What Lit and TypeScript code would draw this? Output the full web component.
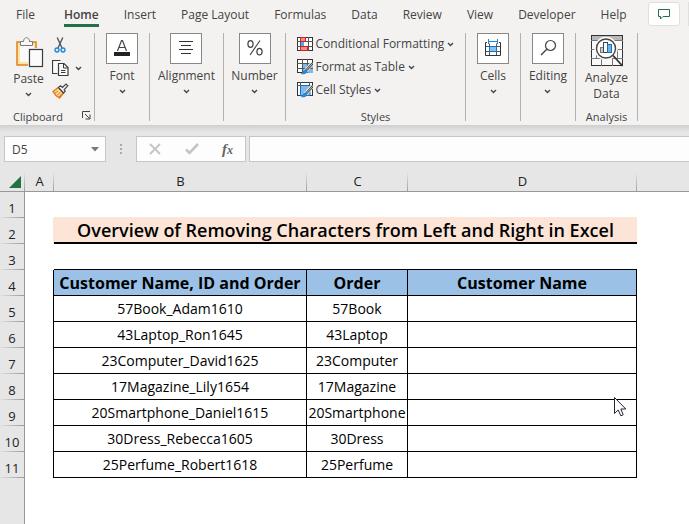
import { LitElement, html, css } from "lit";
import { customElement } from "lit/decorators.js";

const chevron = html`<svg class="chev" width="7" height="5" viewBox="0 0 7 5" aria-hidden="true">
  <path d="M1 1 L3.5 3.5 L6 1" fill="none" stroke="#444" stroke-width="1.4" />
</svg>`;

const icons = {
  paste: html`<svg width="28" height="31" viewBox="0 0 28 31" aria-hidden="true">
    <rect x="1" y="5" width="19" height="23" fill="#fbe3a6" stroke="#e07a10" stroke-width="1.4" />
    <rect x="4" y="8" width="14" height="17" fill="#fafafa" />
    <path d="M4.5 8.5 V4.5 H7.5 C7.5 -0.5 13.5 -0.5 13.5 4.5 H16.5 V8.5 Z" fill="#f8f8f8" stroke="#7a7a7a" />
    <rect x="12" y="11" width="16" height="20" fill="#f3f2f1" />
    <rect x="13.5" y="12.5" width="13" height="17" fill="#fbfbfb" stroke="#3b3b3b" stroke-width="1.2" />
  </svg>`,
  cut: html`<svg width="16" height="16" viewBox="0 0 16 16" aria-hidden="true">
    <path d="M5.2 0.5 L10 11 M10.8 0.5 L6 11" fill="none" stroke="#555" stroke-width="1.4" />
    <circle cx="5" cy="13" r="2" fill="#d8ecfa" stroke="#1e86d2" stroke-width="1.3" />
    <circle cx="11" cy="13" r="2" fill="#d8ecfa" stroke="#1e86d2" stroke-width="1.3" />
  </svg>`,
  copy: html`<svg width="17" height="17" viewBox="0 0 17 17" aria-hidden="true">
    <path d="M5.5 13.5 H0.5 V0.5 H8.5" fill="#fafafa" stroke="#3b3b3b" stroke-width="1.2" />
    <path d="M6.5 3.5 H12 L16 7.5 V15.5 H6.5 Z" fill="#fafafa" stroke="#3b3b3b" stroke-width="1.2" />
    <path d="M11.5 3.5 V8 H16 M9 10.5 H13.5 M9 12.5 H13.5" fill="none" stroke="#3b3b3b" />
  </svg>`,
  brush: html`<svg width="17" height="16" viewBox="0 0 17 16" aria-hidden="true">
    <path d="M1 8.5 L6.5 4.5 L11.5 10 L7.5 15 Q3 12.5 1 8.5 Z" fill="#fbd9a0" stroke="#e07a10" stroke-width="1.4" />
    <path d="M3 10 L6 8 M5 12.5 L8.5 9 M7 14 L10 10.5" stroke="#e07a10" />
    <path d="M6.5 4.5 L8.5 2.8 L10.5 4.5 L14 1 L15.8 2.8 L12.2 6.5 L13.2 8.2 L11.5 10 Z" fill="#f8f8f8" stroke="#444" stroke-width="1.2" />
  </svg>`,
  launcher: html`<svg width="9" height="9" viewBox="0 0 9 9" aria-hidden="true">
    <path d="M0.5 7 V0.5 H8 M3 3 L7.5 7.5 M8 3.5 V8 H3.5" fill="none" stroke="#444" />
  </svg>`,
  font: html`<svg width="30" height="29" viewBox="0 0 30 29" aria-hidden="true">
    <path d="M10.5 17 L14.5 6.5 H15.5 L19.5 17 M12 13.5 H18" fill="none" stroke="#444" stroke-width="1.2" />
    <rect x="7" y="18" width="16" height="4" fill="#222" />
  </svg>`,
  align: html`<svg width="30" height="29" viewBox="0 0 30 29" aria-hidden="true">
    <path d="M8 7.5 H22 M10 11.5 H20 M8 15.5 H22 M10 19.5 H20" stroke="#333" />
  </svg>`,
  percent: html`<svg width="30" height="29" viewBox="0 0 30 29" aria-hidden="true">
    <ellipse cx="10.5" cy="10" rx="2.6" ry="3.3" fill="none" stroke="#444" stroke-width="1.2" />
    <ellipse cx="19.5" cy="17.6" rx="2.6" ry="3.3" fill="none" stroke="#444" stroke-width="1.2" />
    <path d="M20 6.5 L10 21" stroke="#444" stroke-width="1.2" />
  </svg>`,
  cells: html`<svg width="30" height="29" viewBox="0 0 30 29" aria-hidden="true">
    <path d="M11.5 9.5 V21.5 M18.5 9.5 V21.5 M7 12.5 H22.5 M7 17.5 H22.5" stroke="#555" fill="none" />
    <path d="M9 8.5 H7.5 V21.5 H22.5 V8.5 H21" stroke="#333" fill="none" />
    <rect x="11.5" y="12.5" width="7" height="5" fill="#8ac2ec" stroke="#1672c0" />
    <path d="M10.5 5 V10 M19.5 5 V10 M10.5 7.5 H19.5" stroke="#1e86d2" fill="none" />
  </svg>`,
  find: html`<svg width="30" height="29" viewBox="0 0 30 29" aria-hidden="true">
    <circle cx="17.5" cy="11.5" r="5" fill="none" stroke="#444" stroke-width="1.2" />
    <path d="M13.8 15.2 L8 21" stroke="#444" stroke-width="1.4" />
  </svg>`,
  conditional: html`<svg width="16" height="15" viewBox="0 0 16 15" aria-hidden="true">
    <rect x="0.5" y="0.5" width="15" height="13" fill="#fff" stroke="#333" />
    <path d="M3.5 0 V14 M11.5 0 V14 M0 4.5 H16 M0 9.5 H16" stroke="#555" />
    <rect x="3.5" y="0.5" width="5" height="4" fill="#f08c8c" stroke="#d92020" />
    <rect x="4" y="5" width="3" height="4" fill="#5aa9e6" />
    <rect x="3.5" y="9.5" width="7" height="4" fill="#f08c8c" stroke="#d92020" />
  </svg>`,
  tableFormat: html`<svg width="16" height="16" viewBox="0 0 16 16" aria-hidden="true">
    <rect x="0.5" y="0.5" width="15" height="13" fill="#fff" stroke="#333" />
    <path d="M5 4 H16 V14 H5 Z" fill="#7db9ea" />
    <path d="M5.5 0 V14 M10.5 0 V14 M0 4.5 H16 M0 9.5 H16" stroke="#555" />
    <path d="M15.5 4 L8.5 12" stroke="#f3f2f1" stroke-width="4" />
    <path d="M15.5 4.5 L9 11.5" stroke="#444" stroke-width="2.4" />
    <path d="M15 5 L9.5 11" stroke="#ddd" stroke-width="0.8" />
    <path d="M9.5 10.5 Q11 13.5 8.5 14.8 Q6 15.8 3.5 15 Q6 14 6.2 12 Q7.5 10 9.5 10.5 Z" fill="#2a86d1" />
  </svg>`,
  cellStyle: html`<svg width="16" height="16" viewBox="0 0 16 16" aria-hidden="true">
    <rect x="0.5" y="0.5" width="15" height="13" fill="#fff" stroke="#333" />
    <path d="M3.5 0 V14 M12.5 0 V3 M0 3.5 H16" stroke="#555" />
    <path d="M3.5 3.5 H13 V13.5 H3.5 Z" fill="#7db9ea" stroke="#1672c0" />
    <path d="M15.5 4 L8.5 12" stroke="#f3f2f1" stroke-width="4" />
    <path d="M15.5 4.5 L9 11.5" stroke="#444" stroke-width="2.4" />
    <path d="M15 5 L9.5 11" stroke="#ddd" stroke-width="0.8" />
    <path d="M9.5 10.5 Q11 13.5 8.5 14.8 Q6 15.8 3.5 15 Q6 14 6.2 12 Q7.5 10 9.5 10.5 Z" fill="#2a86d1" />
  </svg>`,
  analyze: html`<svg width="32" height="32" viewBox="0 0 32 32" aria-hidden="true">
    <rect x="0.5" y="0.5" width="31" height="30" fill="#fafafa" stroke="#333" />
    <rect x="1" y="1" width="30" height="4" fill="#b9b9b9" />
    <path d="M0 5.5 H32 M0 14.5 H32 M0 23.5 H32 M10.5 5 V6 M21.5 5 V9 M5.5 14 V24 M26.5 14 V24 M10.5 24 V31 M21.5 24 V31" stroke="#777" />
    <circle cx="15" cy="13.5" r="10.2" fill="#fff" stroke="#fafafa" stroke-width="3" />
    <circle cx="15" cy="13.5" r="9.5" fill="#fff" stroke="#444" stroke-width="1.4" />
    <path d="M22 20.5 L31.5 31" stroke="#333" stroke-width="1.8" />
    <rect x="9.5" y="12.5" width="3" height="5" fill="#ccc" stroke="#777" />
    <rect x="12.5" y="7.5" width="4" height="10" fill="#fff" stroke="#444" />
    <rect x="16.5" y="9.5" width="4" height="8" fill="#6fb2e8" stroke="#1672c0" />
  </svg>`,
  comment: html`<svg width="12" height="11" viewBox="0 0 12 11" aria-hidden="true">
    <path d="M0.5 0.5 H11.5 V7.5 H5 L2.5 10 V7.5 H0.5 Z" fill="none" stroke="#217346" />
  </svg>`,
  cancel: html`<svg width="12" height="12" viewBox="0 0 12 12" aria-hidden="true">
    <path d="M1 1 L11 11 M11 1 L1 11" stroke="#c4c4c4" stroke-width="1.8" />
  </svg>`,
  enter: html`<svg width="14" height="12" viewBox="0 0 14 12" aria-hidden="true">
    <path d="M1 6.5 L4.5 10 L13 1" fill="none" stroke="#c4c4c4" stroke-width="2.6" />
  </svg>`,
};

const tabs = ["File", "Home", "Insert", "Page Layout", "Formulas", "Data", "Review", "View", "Developer", "Help"];

const records = [
  ["57Book_Adam1610", "57Book"],
  ["43Laptop_Ron1645", "43Laptop"],
  ["23Computer_David1625", "23Computer"],
  ["17Magazine_Lily1654", "17Magazine"],
  ["20Smartphone_Daniel1615", "20Smartphone"],
  ["30Dress_Rebecca1605", "30Dress"],
  ["25Perfume_Robert1618", "25Perfume"],
];

@customElement("app-root")
export class AppRoot extends LitElement {
  static styles = css`
    :host {
      display: flex;
      flex-direction: column;
      min-height: 100vh;
      overflow: hidden;
      background: #fff;
      color: #444;
      font: 12px/16px "Open Sans", "Noto Sans", sans-serif;
    }
    * { box-sizing: border-box; }
    svg { display: block; flex: none; }
    button {
      font: inherit;
      color: inherit;
      background: none;
      border: 0;
      padding: 0;
      margin: 0;
      white-space: nowrap;
    }
    .top { background: #f3f2f1; }
    .tabs {
      display: flex;
      height: 33px;
      padding-left: 16px;
      overflow: hidden;
    }
    .tablist { display: flex; gap: 25px; flex: 1; }
    .tab {
      height: 27px;
      padding-top: 6px;
      border-bottom: 3px solid transparent;
    }
    .tab:first-child { margin-right: 4px; }
    .tab.on { font-weight: 600; border-color: #217346; }
    .pills { display: flex; gap: 8px; padding-top: 2px; }
    .pill {
      display: grid;
      place-items: center;
      width: 32px;
      height: 24px;
      background: #fff;
      border: 1px solid #e1dfdd;
      border-radius: 3px;
    }
    .pill.cut { width: 1px; border-width: 0 0 0 1px; border-radius: 0; }
    .ribbon { display: flex; height: 92px; }
    .group {
      display: flex;
      flex-direction: column;
      align-items: center;
      height: 88px;
      border-right: 1px solid #b3b0ad;
    }
    .body { flex: 1; }
    .caption {
      font-size: 11px;
      height: 12px;
      line-height: 16px;
      text-align: center;
    }
    .narrow { width: 55px; }
    .align { width: 74px; }
    .mid { width: 62px; }
    .styles { width: 180px; }
    .clipboard { width: 95px; align-items: stretch; }
    .big {
      display: flex;
      flex-direction: column;
      align-items: center;
    }
    .tile {
      width: 32px;
      height: 31px;
      background: #fff;
      border: 1px solid #8a8886;
      margin-bottom: 4px;
    }
    .big .chev { margin-top: 5px; }
    .clip { display: flex; padding: 4px 0 0 13px; gap: 8px; }
    .paste svg:first-child { margin: 0 0 3px 3px; }
    .small { display: flex; flex-direction: column; gap: 7px; }
    .small button { display: flex; align-items: center; gap: 6px; height: 16px; }
    .clipfoot { display: flex; justify-content: space-between; padding: 0 3px 0 13px; }
    .list {
      display: flex;
      flex-direction: column;
      gap: 7px;
      padding-top: 3px;
      width: 158px;
    }
    .list button { display: flex; align-items: center; height: 16px; gap: 3px; }
    .analyze { padding-top: 2px; }
    .analyze svg { margin-bottom: 3px; }
    .fbar {
      display: flex;
      height: 41px;
      padding: 11px 0 4px 4px;
      background: linear-gradient(#cfcfcf, #e6e6e6 7px);
    }
    .box {
      height: 26px;
      background: #fdfdfd;
      border: 1px solid #c6c6c6;
    }
    .name { display: flex; align-items: center; width: 102px; padding-right: 6px; }
    input {
      font: inherit;
      color: #444;
      background: none;
      border: 0;
      outline: 0;
      width: 100%;
      min-width: 0;
      height: 24px;
      padding: 0 7px;
    }
    .dots { width: 30px; display: grid; place-items: center; }
    .tools { display: flex; align-items: center; justify-content: space-between; width: 110px; padding: 0 12px; }
    .fx { font: italic bold 15px/16px "Liberation Serif", serif; color: #666; }
    .fx small { font-size: 12px; }
    .formula { flex: 1; margin-left: 3px; border-right: 0; }
    .sheet { position: relative; flex: 1; display: flex; }
    table {
      width: 100%;
      height: 312px;
      table-layout: fixed;
      border-collapse: separate;
      border-spacing: 0;
      color: #000;
      font: 14px/18px "Open Sans", "Noto Sans", sans-serif;
    }
    .scroll { flex: 1; background: linear-gradient(90deg, #e6e6e6 24px, #999 24px, #999 25px, #fff 25px); }
    .cr { width: 25px; }
    .ca { width: 29px; }
    .cb { width: 253px; }
    .cc { width: 101px; }
    .cd { width: 229px; }
    th, td { height: 26px; padding: 0; text-align: center; white-space: nowrap; font-weight: normal; }
    .col {
      color: #222;
      font-size: 13px;
      padding-top: 5px;
      border-bottom: 1px solid #999;
      background: linear-gradient(#e6e6e6, #888) right 0 top 6px / 1px 100% no-repeat #e6e6e6;
    }
    .col.last { background: #e6e6e6; }
    .corner { vertical-align: bottom; }
    .corner svg { margin: 0 0 3px 9px; }
    .row {
      color: #222;
      font-size: 13px;
      line-height: 16px;
      padding-bottom: 2px;
      vertical-align: bottom;
      border-right: 1px solid #999;
      background: linear-gradient(90deg, #e0e0e0, #999) left bottom / 100% 1px no-repeat #e6e6e6;
    }
    .edge { border-right: 1px solid #000; }
    .under { border-bottom: 1px solid #000; }
    .peachedge { border-right: 1px solid #fce4d6; }
    .peachtop { border-bottom: 1px solid #fce4d6; }
    .title {
      background: #fce4d6;
      border-bottom: 2px solid #000;
      font-size: 18px;
      font-weight: 600;
    }
    .head {
      background: #9bc2e6;
      border-right: 1px solid #000;
      border-bottom: 1px solid #000;
      font-size: 16px;
      font-weight: bold;
    }
    .cell { border-right: 1px solid #000; border-bottom: 1px solid #000; }
    .pointer { position: absolute; left: 614px; top: 231px; }
  `;

  private tile(label: string, icon: unknown, size: string) {
    return html`<div class="group ${size}">
      <button class="big"><span class="tile">${icon}</span>${label}${chevron}</button>
    </div>`;
  }

  private rowHead(n: number) {
    return html`<th class="row" scope="row">${n}</th>`;
  }

  render() {
    return html`
      <header class="top">
        <div class="tabs">
          <div class="tablist" role="tablist">
            ${tabs.map((t) => html`<button class="tab ${t === "Home" ? "on" : ""}" role="tab" aria-selected=${t === "Home"}>${t}</button>`)}
          </div>
          <div class="pills">
            <button class="pill" aria-label="Comments">${icons.comment}</button>
            <span class="pill cut"></span>
          </div>
        </div>
        <div class="ribbon">
          <section class="group clipboard">
            <div class="body clip">
              <button class="big paste">${icons.paste}Paste${chevron}</button>
              <div class="small">
                <button aria-label="Cut">${icons.cut}</button>
                <button aria-label="Copy">${icons.copy}${chevron}</button>
                <button aria-label="Format Painter">${icons.brush}</button>
              </div>
            </div>
            <div class="caption clipfoot">Clipboard<button aria-label="Clipboard settings">${icons.launcher}</button></div>
          </section>
          ${this.tile("Font", icons.font, "narrow")}
          ${this.tile("Alignment", icons.align, "align")}
          ${this.tile("Number", icons.percent, "mid")}
          <section class="group styles">
            <div class="body list">
              <button>${icons.conditional}Conditional Formatting${chevron}</button>
              <button>${icons.tableFormat}Format as Table${chevron}</button>
              <button>${icons.cellStyle}Cell Styles${chevron}</button>
            </div>
            <div class="caption">Styles</div>
          </section>
          ${this.tile("Cells", icons.cells, "narrow")}
          ${this.tile("Editing", icons.find, "narrow")}
          <section class="group mid">
            <div class="body">
              <button class="big analyze">${icons.analyze}<span>Analyze<br />Data</span></button>
            </div>
            <div class="caption">Analysis</div>
          </section>
        </div>
      </header>
      <div class="fbar">
        <div class="box name">
          <input aria-label="Name box" value="D5" />
          <svg width="8" height="5" viewBox="0 0 8 5" aria-hidden="true"><path d="M0 0 H8 L4 4.5 Z" fill="#777" /></svg>
        </div>
        <div class="dots">
          <svg width="2" height="11" viewBox="0 0 2 11" aria-hidden="true"><path d="M0 0h2v2h-2zM0 4h2v2h-2zM0 8h2v2h-2z" fill="#aaa" /></svg>
        </div>
        <div class="box tools">
          <button aria-label="Cancel">${icons.cancel}</button>
          <button aria-label="Enter">${icons.enter}</button>
          <button class="fx" aria-label="Insert function">f<small>x</small></button>
        </div>
        <div class="box formula"><input aria-label="Formula bar" /></div>
      </div>
      <main class="sheet">
        <div class="scroll">
          <table>
            <colgroup>
              <col class="cr" /><col class="ca" /><col class="cb" /><col class="cc" /><col class="cd" /><col />
            </colgroup>
            <thead>
              <tr>
                <th class="col corner">
                  <svg width="12" height="12" viewBox="0 0 12 12" aria-hidden="true"><path d="M12 0 V12 H0 Z" fill="#217346" /></svg>
                </th>
                ${["A", "B", "C", "D"].map((c) => html`<th class="col" scope="col">${c}</th>`)}
                <th class="col last"></th>
              </tr>
            </thead>
            <tbody>
              <tr>${this.rowHead(1)}<td></td><td class="peachtop" colspan="3"></td><td></td></tr>
              <tr>
                ${this.rowHead(2)}<td class="peachedge"></td>
                <td class="title" colspan="3">Overview of Removing Characters from Left and Right in Excel</td><td></td>
              </tr>
              <tr>${this.rowHead(3)}<td></td><td class="under" colspan="3"></td><td></td></tr>
              <tr>
                ${this.rowHead(4)}<td class="edge"></td>
                <td class="head">Customer Name, ID and Order</td>
                <td class="head">Order</td>
                <td class="head">Customer Name</td><td></td>
              </tr>
              ${records.map(
                ([full, order], i) => html`<tr>
                  ${this.rowHead(i + 5)}<td class="edge"></td>
                  <td class="cell">${full}</td><td class="cell">${order}</td><td class="cell"></td><td></td>
                </tr>`
              )}
            </tbody>
          </table>
        </div>
        <svg class="pointer" width="13" height="20" viewBox="0 0 13 20" aria-hidden="true">
          <path d="M0.5 0.5 V16.5 L4.2 13 L6.8 18.8 L9.2 17.8 L6.8 12 H11.8 Z" fill="#fff" stroke="#223" />
        </svg>
      </main>
    `;
  }
}
